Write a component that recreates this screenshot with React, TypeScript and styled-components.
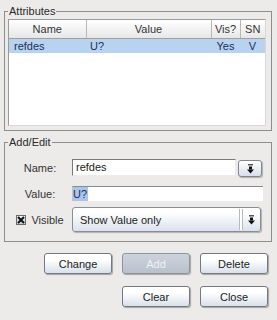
import React from 'react';
import styled, { createGlobalStyle } from 'styled-components';

const Global = createGlobalStyle`
  html, body { margin: 0; padding: 0; background: #edeaea; }
  body { font-family: "Liberation Sans", Arial, sans-serif; font-size: 11px; color: #2a2a2a; }
  * { box-sizing: border-box; }
`;

const Page = styled.div`
  width: 277px;
  height: 320px;
  padding: 5px 5px 0 4px;
  display: flex;
  flex-direction: column;
`;

const Frame = styled.fieldset<{ $top?: number }>`
  margin: ${(p) => p.$top ?? 0}px 0 0 0;
  padding: 1px 5px 4px 3px;
  border: 1px solid #8d8d8d;
  min-width: 0;
`;

const Legend = styled.legend`
  padding: 0 1px;
  margin: 0;
  font-size: 11px;
  line-height: 13px;
  color: #2a2a2a;
`;

const ListBox = styled.div`
  height: 107px;
  background: #ffffff;
  border: 1px solid #9a9a9a;
  border-right-color: #d8d8d8;
  border-bottom-color: #d8d8d8;
`;

const Table = styled.table`
  width: 100%;
  border-collapse: collapse;
  table-layout: fixed;
`;

const Head = styled.th<{ $w: number }>`
  width: ${(p) => p.$w}px;
  height: 18px;
  padding: 0;
  font-weight: normal;
  font-size: 11px;
  color: #333;
  text-align: center;
  background: linear-gradient(#ffffff, #e7e7e7);
  border-right: 1px solid #b8b8b8;
  border-bottom: 1px solid #a0a0a0;
  &:last-child { border-right: none; }
`;

const Cell = styled.td<{ $align?: string; $pad?: number }>`
  height: 14px;
  padding: 0 0 0 ${(p) => p.$pad ?? 0}px;
  font-size: 11px;
  line-height: 14px;
  color: #1e2e5a;
  background: #b8d3ef;
  text-align: ${(p) => p.$align ?? 'left'};
  white-space: nowrap;
`;

const FormGrid = styled.div`
  display: grid;
  grid-template-columns: 64px 1fr;
  grid-template-rows: 18px 9px 15px 6px 25px;
  padding: 9px 4px 5px 0;
  align-items: center;
`;

const Label = styled.div`
  text-align: center;
  color: #333;
  display: flex;
  align-items: center;
  justify-content: center;
  gap: 5px;
`;

const FieldRow = styled.div`
  display: flex;
  align-items: center;
  gap: 2px;
  height: 100%;
`;

const TextField = styled.div`
  flex: 1;
  height: 17px;
  align-self: flex-start;
  background: #ffffff;
  border-top: 1px solid #7a7a7a;
  border-left: 1px solid #7a7a7a;
  border-right: 1px solid #ececec;
  border-bottom: 1px solid #ececec;
  padding-left: 3px;
  line-height: 15px;
  color: #222;
`;

const ValueField = styled.div`
  height: 15px;
  margin-right: -1px;
  background: #ffffff;
  border-top: 1px solid #8a8a8a;
  border-left: 1px solid #c4c4c4;
  line-height: 14px;
  color: #1e2e5a;
`;

const Selected = styled.span`
  display: inline-block;
  background: #a9c6ea;
  padding: 0 1px 0 0;
`;

const SmallButton = styled.div`
  width: 24px;
  height: 17px;
  margin-top: 1px;
  border: 1px solid #80858f;
  border-radius: 3px;
  background: linear-gradient(#ffffff, #d8dfe9);
  box-shadow: 1px 1px 1px rgba(0, 0, 0, 0.25);
  display: flex;
  align-items: center;
  justify-content: center;
`;

const Combo = styled.div`
  height: 25px;
  margin-right: 1px;
  border: 1px solid #888e98;
  border-radius: 3px;
  background: linear-gradient(#ffffff 20%, #dbe2ec);
  box-shadow: 1px 1px 1px rgba(0, 0, 0, 0.25);
  display: flex;
  align-items: center;
  padding-left: 7px;
  color: #222;
`;

const ComboText = styled.span`
  flex: 1;
`;

const Grooves = styled.div`
  width: 4px;
  height: 21px;
  border-left: 1px solid #b4bac4;
  border-right: 1px solid #b4bac4;
  background: #ffffff;
  margin-right: 5px;
`;

const ComboArrow = styled.div`
  width: 10px;
  display: flex;
  justify-content: flex-start;
  margin-right: 2px;
`;

const Check = styled.div`
  width: 10px;
  height: 10px;
  border: 1px solid #6a6a6a;
  background: linear-gradient(#f4f4f4, #c8ccd2);
  display: flex;
  align-items: center;
  justify-content: center;
`;

const Buttons = styled.div`
  display: grid;
  grid-template-columns: repeat(3, 68px);
  column-gap: 10px;
  row-gap: 12px;
  justify-content: end;
  padding-right: 4px;
  margin-top: 11px;
`;

const Button = styled.div<{ $col?: number; $disabled?: boolean }>`
  grid-column: ${(p) => p.$col ?? 'auto'};
  height: 21px;
  border: 1px solid ${(p) => (p.$disabled ? '#8d949e' : '#737882')};
  border-radius: 3px;
  background: ${(p) =>
    p.$disabled ? 'linear-gradient(#cdd3dc, #b9c1cc)' : 'linear-gradient(#ffffff 30%, #d9e0ea)'};
  box-shadow: 1px 1px 1px rgba(0, 0, 0, 0.3);
  display: flex;
  align-items: center;
  justify-content: center;
  color: ${(p) => (p.$disabled ? '#eef1f5' : '#222')};
  font-size: 11px;
`;

const DownIcon = () => (
  <svg width="7" height="10" viewBox="0 0 7 10">
    <rect x="1" y="0" width="5" height="1.5" fill="#555" />
    <rect x="2" y="2.5" width="3" height="3" fill="#111" />
    <polygon points="0,5.5 7,5.5 3.5,9.5" fill="#111" />
  </svg>
);

const CrossIcon = () => (
  <svg width="8" height="8" viewBox="0 0 8 8">
    <path d="M1 1 L7 7 M7 1 L1 7" stroke="#111" strokeWidth="2" />
  </svg>
);

export default function App() {
  return (
    <>
      <Global />
      <Page>
        <Frame>
          <Legend>Attributes</Legend>
          <ListBox>
            <Table>
              <thead>
                <tr>
                  <Head $w={77}>Name</Head>
                  <Head $w={125}>Value</Head>
                  <Head $w={29}>Vis?</Head>
                  <Head $w={25}>SN</Head>
                </tr>
              </thead>
              <tbody>
                <tr>
                  <Cell $pad={5}>refdes</Cell>
                  <Cell $pad={4}>U?</Cell>
                  <Cell $align="center">Yes</Cell>
                  <Cell $align="center">V</Cell>
                </tr>
              </tbody>
            </Table>
          </ListBox>
        </Frame>
        <Frame $top={5}>
          <Legend>Add/Edit</Legend>
          <FormGrid>
            <Label>Name:</Label>
            <FieldRow>
              <TextField>refdes</TextField>
              <SmallButton>
                <DownIcon />
              </SmallButton>
            </FieldRow>
            <div />
            <div />
            <Label>Value:</Label>
            <ValueField>
              <Selected>U?</Selected>
            </ValueField>
            <div />
            <div />
            <Label>
              <Check>
                <CrossIcon />
              </Check>
              Visible
            </Label>
            <Combo>
              <ComboText>Show Value only</ComboText>
              <Grooves />
              <ComboArrow>
                <DownIcon />
              </ComboArrow>
            </Combo>
          </FormGrid>
        </Frame>
        <Buttons>
          <Button>Change</Button>
          <Button $disabled>Add</Button>
          <Button>Delete</Button>
          <Button $col={2}>Clear</Button>
          <Button $col={3}>Close</Button>
        </Buttons>
      </Page>
    </>
  );
}
